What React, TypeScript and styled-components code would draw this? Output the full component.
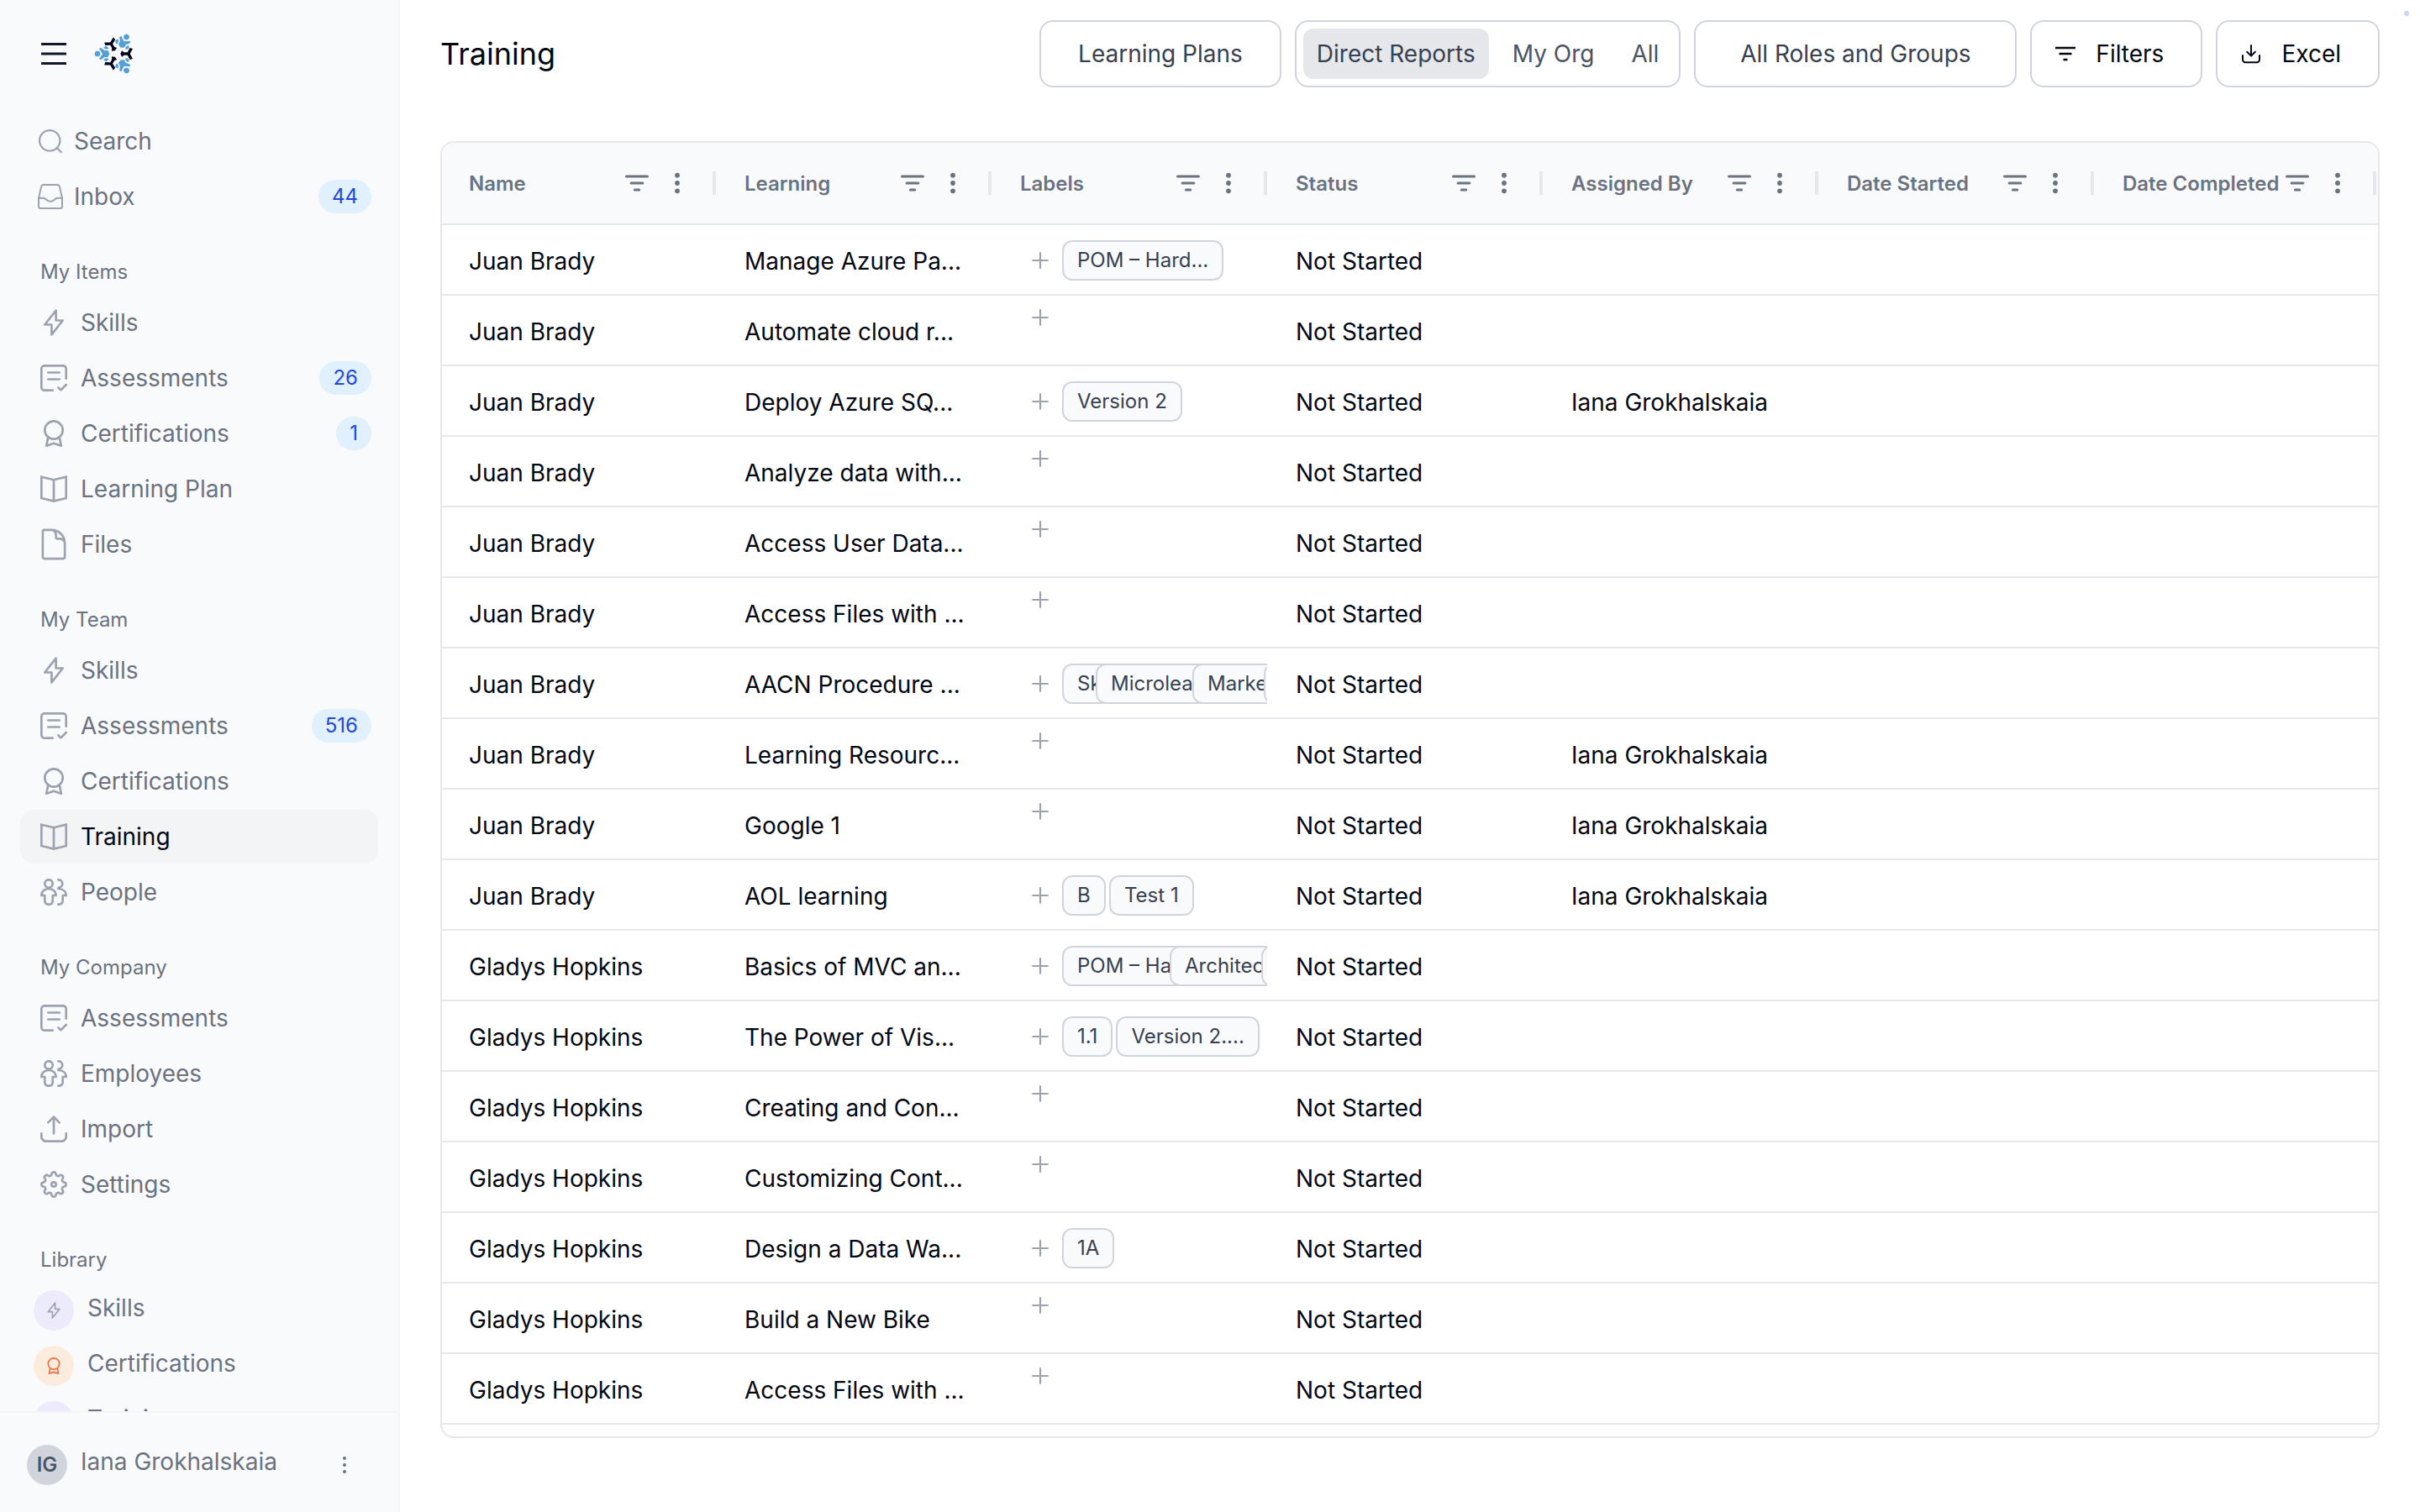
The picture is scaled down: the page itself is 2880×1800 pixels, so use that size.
import React from 'react';
import styled, { createGlobalStyle, css } from 'styled-components';

const color = {
  ink: '#030712',
  heading: '#111827',
  strong: '#374151',
  body: '#4b5563',
  muted: '#6b7280',
  icon: '#9ca3af',
  control: '#d1d5db',
  line: '#e5e7eb',
  active: '#f3f4f6',
  surface: '#f9fafc',
};

const GlobalStyle = createGlobalStyle`
  *, *::before, *::after { box-sizing: border-box; }
  body {
    margin: 0;
    background: #fff;
    color: ${color.ink};
    font-family: Inter, "Liberation Sans", sans-serif;
    font-size: 28px;
    line-height: 40px;
  }
  button, input { font: inherit; }
`;

const plainButton = css`
  display: inline-flex;
  align-items: center;
  justify-content: center;
  padding: 0;
  border: 0;
  background: none;
  color: inherit;
  cursor: pointer;
`;

/* ---------- shell ---------- */

const Shell = styled.div`
  display: flex;
  height: 100vh;
  overflow: hidden;
`;

const Sidebar = styled.aside`
  flex: 0 0 476px;
  display: flex;
  flex-direction: column;
  border-right: 2px solid ${color.active};
  background: ${color.surface};
  color: ${color.muted};
`;

const Brand = styled.div`
  flex: none;
  display: flex;
  align-items: center;
  gap: 32px;
  height: 128px;
  padding: 0 48px;
`;

const MenuButton = styled.button`
  ${plainButton}
  width: 32px;
  height: 32px;
  color: ${color.heading};
`;

const Nav = styled.nav`
  flex: 1;
  min-height: 0;
  overflow: hidden;
  padding: 8px 24px 0;
`;

const NavList = styled.ul`
  display: flex;
  flex-direction: column;
  gap: 2px;
  margin: 0;
  padding: 0;
  list-style: none;
`;

const NavHeading = styled.h2`
  margin: 2px 0;
  padding: 40px 24px 10px;
  font-size: 24px;
  font-weight: 400;
  line-height: 32px;
`;

const NavLink = styled.a<{ $active?: boolean; $lead?: boolean }>`
  display: flex;
  align-items: center;
  gap: ${p => (p.$lead ? 12 : 16)}px;
  height: 64px;
  padding: 0 8px 0 ${p => (p.$lead ? 20 : 24)}px;
  border-radius: 16px;
  background: ${p => (p.$active ? color.active : 'transparent')};
  color: ${p => (p.$active ? color.ink : color.muted)};
  text-decoration: none;

  svg { flex: none; color: ${color.icon}; }
`;

const NavText = styled.span`
  flex: 1;
  white-space: nowrap;
`;

const Count = styled.span`
  padding: 0 16px;
  border-radius: 20px;
  background: #e1f0fd;
  color: #2148d6;
  font-size: 24px;
`;

const LibraryLink = styled(NavLink)`
  padding-left: 16px;

  ${NavText} { padding-bottom: 6px; }
`;

const LibraryIcon = styled.span<{ $tone: 'violet' | 'orange' }>`
  display: flex;
  align-items: center;
  justify-content: center;
  width: 48px;
  height: 48px;
  border-radius: 50%;
  background: ${p => (p.$tone === 'violet' ? '#edeafc' : '#fbecdd')};

  svg { color: ${p => (p.$tone === 'violet' ? color.icon : '#f26b3f')}; }
`;

const Account = styled.div`
  flex: none;
  display: flex;
  align-items: center;
  gap: 16px;
  height: 120px;
  padding: 6px 48px 0 32px;
  border-top: 2px solid ${color.active};

  ${NavText} { padding-bottom: 8px; }
`;

const Avatar = styled.span`
  display: flex;
  align-items: center;
  justify-content: center;
  width: 48px;
  height: 48px;
  border-radius: 50%;
  background: ${color.control};
  color: ${color.body};
  font-size: 24px;
  font-weight: 600;
`;

const IconButton = styled.button`
  ${plainButton}
  flex: none;
  width: 32px;
  height: 32px;
`;

/* ---------- content ---------- */

const Main = styled.main`
  position: relative;
  flex: 1;
  min-width: 0;
  display: flex;
  flex-direction: column;
  padding: 24px 48px 88px;
`;

const StatusDot = styled.span`
  position: absolute;
  top: 13px;
  right: 13px;
  width: 6px;
  height: 6px;
  border-radius: 50%;
  background: #c7d2fe;
`;

const Toolbar = styled.header`
  flex: none;
  display: flex;
  align-items: center;
  gap: 16px;
  margin-bottom: 64px;
`;

const Title = styled.h1`
  flex: 1;
  margin: 0;
  font-size: 36px;
  font-weight: 400;
  line-height: 48px;
`;

const ToolButton = styled.button<{ $wide?: boolean; $icon?: boolean }>`
  ${plainButton}
  gap: 20px;
  height: 80px;
  min-width: ${p => (p.$wide ? '384px' : '0')};
  padding: 0 44px 0 ${p => (p.$icon ? 24 : 44)}px;
  border: 2px solid ${color.control};
  border-radius: 16px;
  background: #fff;
  color: ${p => (p.$icon ? color.ink : color.strong)};
  white-space: nowrap;
`;

const Segments = styled.div`
  display: flex;
  align-items: center;
  gap: 12px;
  height: 80px;
  padding: 0 8px;
  border: 2px solid ${color.control};
  border-radius: 16px;
`;

const Segment = styled.button<{ $on?: boolean }>`
  ${plainButton}
  height: 60px;
  padding: 0 16px;
  border-radius: 12px;
  background: ${p => (p.$on ? color.line : 'transparent')};
  color: ${p => (p.$on ? color.strong : color.body)};
  white-space: nowrap;
`;

const Panel = styled.section`
  flex: 1;
  min-height: 0;
  overflow: hidden;
  border: 2px solid ${color.line};
  border-radius: 16px;
`;

const Grid = styled.table`
  width: 100%;
  table-layout: fixed;
  border-collapse: separate;
  border-spacing: 0;
`;

const Column = styled.col<{ $fill?: boolean }>`
  width: ${p => (p.$fill ? 'auto' : '328px')};
`;

const HeadCell = styled.th`
  height: 98px;
  padding: 0 2px 0 32px;
  border-bottom: 2px solid ${color.line};
  background: ${color.surface};
  color: ${color.muted};
  font-size: 24px;
  font-weight: 600;
  text-align: left;
`;

const HeadContent = styled.div`
  display: flex;
  align-items: center;
`;

const HeadText = styled.span`
  flex: 1;
  min-width: 0;
  padding-top: 2px;
  white-space: nowrap;
`;

const HeadActions = styled.span`
  display: flex;
  gap: 16px;
`;

const Divider = styled.span`
  width: 4px;
  height: 28px;
  margin-left: 26px;
  background: ${color.line};
`;

const Cell = styled.td`
  height: 84px;
  padding: 4px 32px 0;
  border-bottom: 2px solid ${color.line};
  overflow: hidden;
  white-space: nowrap;
`;

const LabelCell = styled(Cell)`
  padding: 0 2px 0 32px;
`;

const Labels = styled.div<{ $empty: boolean }>`
  display: flex;
  align-items: ${p => (p.$empty ? 'flex-start' : 'center')};
  height: 82px;
  padding-top: 2px;
  overflow: hidden;
`;

const AddButton = styled.button`
  ${plainButton}
  flex: none;
  width: 48px;
  height: 48px;
  margin-right: 2px;
  color: ${color.icon};
`;

const LabelSlot = styled.span<{ $width?: number }>`
  flex: none;
  display: flex;
  width: ${p => (p.$width ? `${p.$width}px` : 'auto')};
  margin-right: 4px;
`;

const Chip = styled.span`
  flex: none;
  min-width: 52px;
  height: 48px;
  padding: 0 16px;
  border: 2px solid ${color.control};
  border-radius: 12px;
  background: ${color.surface};
  color: ${color.strong};
  font-size: 24px;
  line-height: 44px;
`;

/* ---------- icons ---------- */

type IconProps = { size?: number };

const Line = ({ size = 32, width = 2.7, children }: IconProps & { width?: number; children: React.ReactNode }) => (
  <svg
    width={size}
    height={size}
    viewBox="0 0 32 32"
    fill="none"
    stroke="currentColor"
    strokeWidth={width}
    strokeLinecap="round"
    strokeLinejoin="round"
    aria-hidden="true"
  >
    {children}
  </svg>
);

const SearchIcon = () => (
  <Line width={2.2}>
    <circle cx="15.2" cy="15.3" r="12.2" />
    <path d="M24 24.4L29 29.2" />
  </Line>
);

const InboxIcon = () => (
  <Line width={2}>
    <path d="M2 17.7L5 4.6Q5.6 2 8 2H24Q26.4 2 27 4.6L30 17.7V27.8Q30 30 27.8 30H4.2Q2 30 2 27.8Z" />
    <path d="M2 17.7H7.5C11 17.7 11 22 16 22S21 17.7 24.5 17.7H30" />
  </Line>
);

const BoltIcon = ({ size }: IconProps) => (
  <Line size={size}>
    <path d="M18.6 1.6L5.3 18.5H13.4V30.4L26.7 13.5H18.6Z" />
  </Line>
);

const AssessmentIcon = () => (
  <Line>
    <path d="M14.7 30.7H5A3.7 3.7 0 0 1 1.3 27V5A3.7 3.7 0 0 1 5 1.3H27A3.7 3.7 0 0 1 30.7 5V16.7" />
    <path d="M9.3 9.5H22.7M9.3 17.5H22.7M21.4 27.4L24.4 30.4L30.7 24" />
  </Line>
);

const RibbonIcon = ({ size }: IconProps) => (
  <Line size={size}>
    <circle cx="16" cy="12" r="10.7" />
    <path d="M9 21.5L7.2 30.7L16 27.8L24.8 30.7L23 21.5" />
  </Line>
);

const BookIcon = () => (
  <svg width="32" height="32" viewBox="0 0 32 32" fill="none" stroke="currentColor" strokeWidth="2.7" aria-hidden="true">
    <path d="M1.3 1.7L16 5.2L30.7 1.7V27L16 30.6L1.3 27ZM16 5.2V30.6" />
  </svg>
);

const FileIcon = () => (
  <svg
    width="32"
    height="32"
    viewBox="2.86 2.86 18.28 18.28"
    overflow="visible"
    fill="none"
    stroke="currentColor"
    strokeWidth="1.5"
    strokeLinejoin="round"
    aria-hidden="true"
  >
    <path d="M19.5 14.25v-2.625a3.375 3.375 0 0 0-3.375-3.375h-1.5A1.125 1.125 0 0 1 13.5 7.125v-1.5a3.375 3.375 0 0 0-3.375-3.375H8.25m2.25 0H5.625c-.621 0-1.125.504-1.125 1.125v17.25c0 .621.504 1.125 1.125 1.125h12.75c.621 0 1.125-.504 1.125-1.125V11.25a9 9 0 0 0-9-9Z" />
  </svg>
);

const PeopleIcon = () => (
  <Line>
    <circle cx="10" cy="6" r="4.7" />
    <path d="M10 12C5 12 1.3 15.3 1.3 20H5.3V26C5.3 29 7 30.7 10 30.7S14.7 29 14.7 26V20H18.7C18.7 15.3 15 12 10 12Z" />
    <path d="M21.3 1.3A4.7 4.7 0 0 1 21.8 10.7M21.3 12C27 12 30.7 15.3 30.7 20H26.7V26C26.7 29 24.5 30.7 21.3 30.7" />
  </Line>
);

const UploadIcon = () => (
  <Line>
    <path d="M16 21.5V1.6M9.3 8.4L16 1.6L22.7 8.4" />
    <path d="M1.3 21.3V25A5.7 5.7 0 0 0 7 30.7H25A5.7 5.7 0 0 0 30.7 25V21.3" />
  </Line>
);

const gearOutline = Array.from({ length: 128 }, (_, i) => {
  const angle = (i / 128) * Math.PI * 2;
  const radius = 12.8 + 1.9 * Math.tanh(1.8 * Math.cos(angle * 8));
  return `${(16 + radius * Math.cos(angle)).toFixed(2)},${(16 + radius * Math.sin(angle)).toFixed(2)}`;
}).join(' ');

const GearIcon = () => (
  <Line>
    <polygon points={gearOutline} />
    <circle cx="16" cy="16" r="2.7" />
  </Line>
);

const MenuIcon = () => (
  <svg width="32" height="32" viewBox="0 0 32 32" stroke="currentColor" strokeWidth="3" aria-hidden="true">
    <path d="M1 4.5H31M1 16H31M1 27.5H31" />
  </svg>
);

const FilterIcon = () => (
  <Line width={3.2}>
    <path d="M3.6 8H28.4M9.2 16H22.8M13.4 24H18.6" />
  </Line>
);

const FunnelIcon = () => (
  <svg width="32" height="32" viewBox="0 0 32 32" stroke="currentColor" strokeWidth="2.7" aria-hidden="true">
    <path d="M4 9H28M8.5 16H23.5M13.5 23H18.5" />
  </svg>
);

const DownloadIcon = () => (
  <Line width={2}>
    <path d="M16 6V18.6M11.2 13.8L16 18.6L20.8 13.8M6 18V23A3.2 3.2 0 0 0 9.2 26.2H22.8A3.2 3.2 0 0 0 26 23V18" />
  </Line>
);

const DotsIcon = ({ radius = 2.9, step = 9.3 }: { radius?: number; step?: number }) => (
  <svg width="32" height="32" viewBox="0 0 32 32" fill="currentColor" aria-hidden="true">
    <circle cx="16" cy={16 - step} r={radius} />
    <circle cx="16" cy="16" r={radius} />
    <circle cx="16" cy={16 + step} r={radius} />
  </svg>
);

const PlusIcon = () => (
  <Line width={2.2}>
    <path d="M16 7.2V24.8M7.2 16H24.8" />
  </Line>
);

const Logo = () => (
  <svg width="48" height="48" viewBox="-81 -72 144 144" role="img" aria-label="Home">
    {[0, 120, 240].map(turn => (
      <g key={turn} transform={`rotate(${turn})`}>
        <g fill="#559fd8">
          <circle cx="-69" cy="0" r="10" />
          <path d="M-63 -18L-57 -22L-44 -12H-32L-26 0L-32 12H-44L-57 22L-63 18L-51 0Z" />
          <path d="M-47 -23L-38 -28L-29 -20L-33 -16L-43 -17ZM-47 23L-38 28L-29 20L-33 16L-43 17Z" />
        </g>
        <path
          d="M13 0L18 -11L26 -5H38L47 -21L57 -18L47 0L57 18L47 21L38 5H26L18 11Z"
          fill="#06061a"
        />
      </g>
    ))}
  </svg>
);

/* ---------- data ---------- */

type NavItem = { text: string; icon: React.ReactNode; count?: number; active?: boolean };

const topItems: NavItem[] = [
  { text: 'Search', icon: <SearchIcon /> },
  { text: 'Inbox', icon: <InboxIcon />, count: 44 },
];

const sections: { title: string; items: NavItem[] }[] = [
  {
    title: 'My Items',
    items: [
      { text: 'Skills', icon: <BoltIcon /> },
      { text: 'Assessments', icon: <AssessmentIcon />, count: 26 },
      { text: 'Certifications', icon: <RibbonIcon />, count: 1 },
      { text: 'Learning Plan', icon: <BookIcon /> },
      { text: 'Files', icon: <FileIcon /> },
    ],
  },
  {
    title: 'My Team',
    items: [
      { text: 'Skills', icon: <BoltIcon /> },
      { text: 'Assessments', icon: <AssessmentIcon />, count: 516 },
      { text: 'Certifications', icon: <RibbonIcon /> },
      { text: 'Training', icon: <BookIcon />, active: true },
      { text: 'People', icon: <PeopleIcon /> },
    ],
  },
  {
    title: 'My Company',
    items: [
      { text: 'Assessments', icon: <AssessmentIcon /> },
      { text: 'Employees', icon: <PeopleIcon /> },
      { text: 'Import', icon: <UploadIcon /> },
      { text: 'Settings', icon: <GearIcon /> },
    ],
  },
];

const library: { text: string; tone: 'violet' | 'orange'; icon?: React.ReactNode }[] = [
  { text: 'Skills', tone: 'violet', icon: <BoltIcon size={20} /> },
  { text: 'Certifications', tone: 'orange', icon: <RibbonIcon size={20} /> },
  { text: 'Training', tone: 'violet' },
];

const columns = ['Name', 'Learning', 'Labels', 'Status', 'Assigned By', 'Date Started', 'Date Completed'];

/* A label with a width gives up the rest of its room, and the next one overlaps it. */
type Label = { text: string; width?: number };
type Row = { name: string; learning: string; labels?: Label[]; assignedBy?: string };

const juan = 'Juan Brady';
const gladys = 'Gladys Hopkins';
const iana = 'Iana Grokhalskaia';

const rows: Row[] = [
  { name: juan, learning: 'Manage Azure Pa...', labels: [{ text: 'POM – Hard...' }] },
  { name: juan, learning: 'Automate cloud r...' },
  { name: juan, learning: 'Deploy Azure SQ...', labels: [{ text: 'Version 2' }], assignedBy: iana },
  { name: juan, learning: 'Analyze data with...' },
  { name: juan, learning: 'Access User Data...' },
  { name: juan, learning: 'Access Files with ...' },
  {
    name: juan,
    learning: 'AACN Procedure ...',
    labels: [
      { text: 'Skills', width: 36 },
      { text: 'Microlearn...', width: 111 },
      { text: 'Marketing', width: 81 },
      { text: '' },
    ],
  },
  { name: juan, learning: 'Learning Resourc...', assignedBy: iana },
  { name: juan, learning: 'Google 1', assignedBy: iana },
  { name: juan, learning: 'AOL learning', labels: [{ text: 'B' }, { text: 'Test 1' }], assignedBy: iana },
  {
    name: gladys,
    learning: 'Basics of MVC an...',
    labels: [{ text: 'POM – Hard...', width: 124 }, { text: 'Architectu...', width: 105 }, { text: '' }],
  },
  { name: gladys, learning: 'The Power of Vis...', labels: [{ text: '1.1' }, { text: 'Version 2....' }] },
  { name: gladys, learning: 'Creating and Con...' },
  { name: gladys, learning: 'Customizing Cont...' },
  { name: gladys, learning: 'Design a Data Wa...', labels: [{ text: '1A' }] },
  { name: gladys, learning: 'Build a New Bike' },
  { name: gladys, learning: 'Access Files with ...' },
];

/* ---------- page ---------- */

const NavEntry = ({ item, lead }: { item: NavItem; lead?: boolean }) => (
  <li>
    <NavLink href="#" $lead={lead} $active={item.active} aria-current={item.active ? 'page' : undefined}>
      {item.icon}
      <NavText>{item.text}</NavText>
      {item.count !== undefined && <Count>{item.count}</Count>}
    </NavLink>
  </li>
);

export default function App() {
  return (
    <>
      <GlobalStyle />
      <Shell>
        <Sidebar>
          <Brand>
            <MenuButton aria-label="Toggle menu">
              <MenuIcon />
            </MenuButton>
            <Logo />
          </Brand>
          <Nav>
            <NavList>
              {topItems.map(item => (
                <NavEntry key={item.text} item={item} lead />
              ))}
            </NavList>
            {sections.map(section => (
              <React.Fragment key={section.title}>
                <NavHeading>{section.title}</NavHeading>
                <NavList>
                  {section.items.map(item => (
                    <NavEntry key={item.text} item={item} />
                  ))}
                </NavList>
              </React.Fragment>
            ))}
            <NavHeading>Library</NavHeading>
            <NavList>
              {library.map(item => (
                <li key={item.text}>
                  <LibraryLink href="#">
                    <LibraryIcon $tone={item.tone}>{item.icon}</LibraryIcon>
                    <NavText>{item.text}</NavText>
                  </LibraryLink>
                </li>
              ))}
            </NavList>
          </Nav>
          <Account>
            <Avatar>IG</Avatar>
            <NavText>{iana}</NavText>
            <IconButton aria-label="Account menu">
              <DotsIcon radius={2} step={8} />
            </IconButton>
          </Account>
        </Sidebar>

        <Main>
          <StatusDot />
          <Toolbar>
            <Title>Training</Title>
            <ToolButton>Learning Plans</ToolButton>
            <Segments role="group" aria-label="Scope">
              <Segment $on aria-pressed="true">Direct Reports</Segment>
              <Segment aria-pressed="false">My Org</Segment>
              <Segment aria-pressed="false">All</Segment>
            </Segments>
            <ToolButton $wide>All Roles and Groups</ToolButton>
            <ToolButton $icon>
              <FunnelIcon />
              Filters
            </ToolButton>
            <ToolButton $icon>
              <DownloadIcon />
              Excel
            </ToolButton>
          </Toolbar>

          <Panel>
            <Grid>
              <colgroup>
                {columns.map((name, i) => (
                  <Column key={name} $fill={i === columns.length - 1} />
                ))}
              </colgroup>
              <thead>
                <tr>
                  {columns.map(name => (
                    <HeadCell key={name} scope="col">
                      <HeadContent>
                        <HeadText>{name}</HeadText>
                        <HeadActions>
                          <IconButton aria-label={`Filter ${name}`}>
                            <FilterIcon />
                          </IconButton>
                          <IconButton aria-label={`${name} column menu`}>
                            <DotsIcon />
                          </IconButton>
                        </HeadActions>
                        <Divider />
                      </HeadContent>
                    </HeadCell>
                  ))}
                </tr>
              </thead>
              <tbody>
                {rows.map((row, i) => (
                  <tr key={i}>
                    <Cell>{row.name}</Cell>
                    <Cell>{row.learning}</Cell>
                    <LabelCell>
                      <Labels $empty={!row.labels}>
                        <AddButton aria-label="Add label">
                          <PlusIcon />
                        </AddButton>
                        {row.labels?.map((label, n) => (
                          <LabelSlot key={n} $width={label.width}>
                            <Chip>{label.text}</Chip>
                          </LabelSlot>
                        ))}
                      </Labels>
                    </LabelCell>
                    <Cell>Not Started</Cell>
                    <Cell>{row.assignedBy}</Cell>
                    <Cell />
                    <Cell />
                  </tr>
                ))}
              </tbody>
            </Grid>
          </Panel>
        </Main>
      </Shell>
    </>
  );
}
